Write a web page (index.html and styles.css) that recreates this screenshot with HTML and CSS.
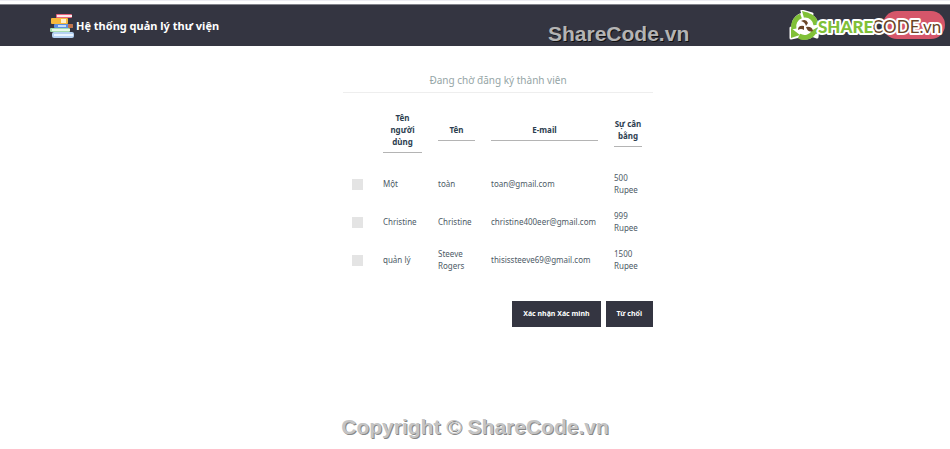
FILE: index.html
```html
<!DOCTYPE html>
<html lang="vi">
<head>
    <meta charset="UTF-8">
    <title>Đang chờ đăng ký thành viên</title>
    <link rel="stylesheet" href="styles.css">
</head>
<body>
    <header class="topbar">
        <a class="brand" href="#">
            <svg class="brand-icon" viewBox="0 0 24 24" aria-hidden="true">
                <rect x="6" y="0" width="16" height="4" rx="1" fill="#e8647c"/>
                <rect x="7" y="1" width="15" height="2" fill="#fbe9ec"/>
                <rect x="1" y="4" width="17" height="6" rx="1" fill="#f6b93b"/>
                <rect x="11" y="5" width="5" height="4" fill="#fdf0cc"/>
                <rect x="4" y="10" width="19" height="4" rx="1" fill="#5b8fe0"/>
                <rect x="8" y="11" width="8" height="2" fill="#c4dcfa"/>
                <rect x="18" y="10" width="5" height="4" rx="1" fill="#c1734a"/>
                <rect x="0" y="14" width="20" height="4" rx="1" fill="#a5dcae"/>
                <rect x="2" y="15" width="18" height="2" fill="#e7f8e8"/>
                <rect x="2" y="18" width="22" height="6" rx="2" fill="#b5d2f3"/>
                <rect x="4" y="20" width="19" height="2" fill="#eaf4ff"/>
            </svg>
            <span>Hệ thống quản lý thư viện</span>
        </a>
        <a class="logo" href="#">
            <svg viewBox="0 0 156 32" role="img" aria-label="ShareCode.vn">
                <rect x="94" y="1" width="62" height="28" rx="14" fill="#d5566a"/>
                <!-- white backing, then the three green blades -->
                <g fill="#fff" stroke="#fff" stroke-width="3" stroke-linejoin="round">
                    <circle cx="16" cy="16" r="12"/>
                    <path d="M2 18 L2 28 L11 26 Z M13 1 L23 4 L15 9 Z M29 17 L28 27 L20 24 Z"/>
                </g>
                <g fill="none" stroke="#80c037" stroke-width="5">
                    <path d="M5 19 A11 11 0 0 1 12 6"/>
                    <path d="M16 5 A11 11 0 0 1 27 15"/>
                    <path d="M25 22 A11 11 0 0 1 10 26"/>
                </g>
                <path d="M2 18 L2 28 L11 25 Z M13 1 L20 3 L15 8 Z M29 17 L28 24 L22 21 Z" fill="#80c037"/>
                <g fill="#6a4526">
                    <path d="M12 11 Q17 8 19 13 L17 16 Q16 12 12 11 Z"/>
                    <path d="M9 20 Q9 15 15 16 L15 20 Q12 18 9 20 Z"/>
                    <path d="M17 17 Q23 16 24 21 Q19 23 17 17 Z"/>
                </g>
                <text class="logo-text logo-code" x="83" y="23">CODE.vn</text>
                <text class="logo-text logo-share" x="29" y="23">SHARE</text>
            </svg>
        </a>
        <span class="watermark watermark-top">ShareCode.vn</span>
    </header>

    <main>
        <form class="members">
            <h1>Đang chờ đăng ký thành viên</h1>
            <table>
                <colgroup>
                    <col class="col-check">
                    <col class="col-user">
                    <col class="col-name">
                    <col class="col-mail">
                    <col class="col-balance">
                </colgroup>
                <thead>
                    <tr>
                        <td></td>
                        <th><div>Tên người dùng</div></th>
                        <th><div>Tên</div></th>
                        <th><div>E-mail</div></th>
                        <th><div>Sự cân bằng</div></th>
                    </tr>
                </thead>
                <tbody>
                    <tr>
                        <td><input type="checkbox" aria-label="Một"></td>
                        <td>Một</td>
                        <td>toàn</td>
                        <td>toan@gmail.com</td>
                        <td>500 Rupee</td>
                    </tr>
                    <tr>
                        <td><input type="checkbox" aria-label="Christine"></td>
                        <td>Christine</td>
                        <td>Christine</td>
                        <td>christine400eer@gmail.com</td>
                        <td>999 Rupee</td>
                    </tr>
                    <tr>
                        <td><input type="checkbox" aria-label="quản lý"></td>
                        <td>quản lý</td>
                        <td>Steeve Rogers</td>
                        <td>thisissteeve69@gmail.com</td>
                        <td>1500 Rupee</td>
                    </tr>
                </tbody>
            </table>
            <div class="actions">
                <button type="button">Xác nhận Xác minh</button>
                <button type="button">Từ chối</button>
            </div>
        </form>
    </main>

    <footer class="watermark">Copyright <span class="copy">©</span> ShareCode.vn</footer>
</body>
</html>
```

FILE: styles.css
```css
* {
    box-sizing: border-box;
}
body {
    margin: 0;
    background: #fff;
    border-top: 1px solid #ececf2;
    font-family: "Noto Sans", "Open Sans", sans-serif;
    font-size: 8px;
    line-height: 12px;
    color: #4d5a66;
}

/* header */
.topbar {
    position: relative;
    display: flex;
    align-items: center;
    justify-content: space-between;
    height: 42px;
    margin-top: 3px;
    padding: 0 5px 0 50px;
    background: #343541;
    border-top: 1px solid #85868e;
}
.brand {
    display: flex;
    align-items: center;
    gap: 2px;
    color: #fff;
    font-size: 11px;
    font-weight: bold;
    text-decoration: none;
}
.brand-icon {
    width: 24px;
    height: 24px;
}
.logo svg {
    display: block;
    width: 156px;
    height: 32px;
}
.logo-text {
    font-family: Lato, sans-serif;
    font-size: 17px;
    stroke: #fff;
    stroke-width: 4px;
    stroke-linejoin: round;
    paint-order: stroke;
}
.logo-share {
    font-weight: 900;
    fill: #80c037;
}
.logo-code {
    fill: #6a4526;
}

.watermark {
    font-family: "Liberation Sans", sans-serif;
    font-size: 21px;
    line-height: 24px;
    font-weight: bold;
    color: #c4c4c4;
    text-align: center;
    text-shadow: 1px 1px 0 #888;
}
.watermark-top {
    position: absolute;
    left: 548px;
    bottom: 0;
    color: #b4b4b4;
    text-shadow: 1px 1px 0 #111;
}
.copy {
    font-weight: normal;
}

/* member table */
main {
    padding: 26px 0 0 46px;
}
.members {
    max-width: 310px;
    margin: 0 auto;
}
h1 {
    margin: 0 0 12px;
    padding-bottom: 4px;
    border-bottom: 1px solid #eee;
    color: #95a5a6;
    font-size: 10px;
    line-height: 16px;
    font-weight: normal;
    text-align: center;
}
table {
    width: 307px;
    table-layout: fixed;
    border-collapse: collapse;
}
.col-check {
    width: 32px;
}
.col-user {
    width: 55px;
}
.col-name {
    width: 53px;
}
.col-mail {
    width: 123px;
}
td, th {
    padding: 7px 8px;
    vertical-align: middle;
    text-align: left;
}
th {
    padding-bottom: 12px;
    color: #2c3e50;
    text-align: center;
}
th div {
    padding-bottom: 4px;
    border-bottom: 1px solid #b4b4b4;
}
input[type="checkbox"] {
    appearance: none;
    display: block;
    width: 11px;
    height: 11px;
    margin: 0 0 0 1px;
    background: #e4e4e4;
}
input[type="checkbox"]:checked {
    background: #343541;
}
.actions {
    display: flex;
    justify-content: flex-end;
    gap: 5px;
    margin-top: 22px;
}
button {
    padding: 7px 11px;
    border: 0;
    background: #343541;
    color: #fff;
    font-family: inherit;
    font-size: 7px;
    line-height: 12px;
    font-weight: bold;
    cursor: pointer;
}

footer {
    margin-top: 88px;
}
```
